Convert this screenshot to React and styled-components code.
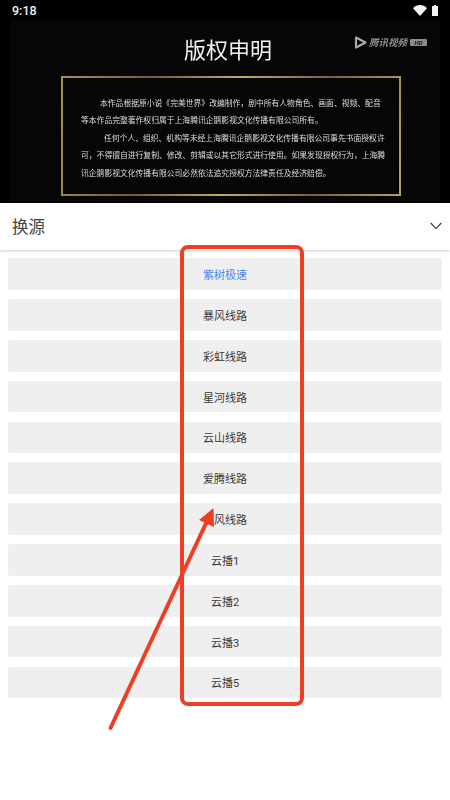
import React from 'react';
import styled, { createGlobalStyle } from 'styled-components';

const Global = createGlobalStyle`
  html, body { margin: 0; padding: 0; background: #fff; }
  #root { width: 450px; height: 800px; }
  * { box-sizing: border-box; }
`;
const CJK = `"Roboto", "Noto Sans CJK SC", sans-serif`;

const Page = styled.div`
  position: relative; width: 450px; height: 800px; overflow: hidden;
  display: flex; flex-direction: column; background: #fff; font-family: ${CJK};
`;
const StatusBar = styled.div`
  height: 20px; flex: none; background: #000; color: #f2f2f2;
  display: flex; align-items: center; justify-content: space-between;
  padding: 0 12px; font-size: 12.5px; font-weight: 500;
`;
const StatusIcons = styled.div`display: flex; align-items: center; gap: 5px;`;
const VideoFrame = styled.div`
  height: 183px; flex: none; background: #000; padding: 0 10px;
`;
const Slide = styled.div`
  height: 100%; padding-top: 13px; display: flex; flex-direction: column; align-items: center;
  position: relative; color: #eee; filter: blur(0.4px);
  background-color: #060606;
  background-image: radial-gradient(#111 0.5px, transparent 0.6px);
  background-size: 2px 2px;
`;
const Title = styled.div`
  font-size: 22px; line-height: 30px; color: #f0f0f0; letter-spacing: 0;
  font-family: "Noto Sans CJK SC", sans-serif; font-weight: 400; margin-left: 6px;
`;
const Brand = styled.div`
  position: absolute; right: 13px; top: 15px; display: flex; align-items: center; gap: 2px; color: #a8a8a8;
`;
const BrandName = styled.span`
  font-size: 9.5px; line-height: 14px; font-style: italic; white-space: nowrap; font-weight: 500;
  font-family: "Noto Sans CJK SC", sans-serif;
`;
const BrandBadge = styled.span`
  width: 17px; margin-left: 1px; text-align: center;
  font-size: 6px; line-height: 7px; height: 7px; background: #8c8c8c; color: #111;
  font-weight: 700; border-radius: 1px; font-style: italic;
`;
const Notice = styled.div`
  margin: 13px 0 0 12px; width: 340px; height: 120px; flex: none; padding: 15.5px 0 0 18px;
  border: 2px solid; border-image: linear-gradient(100deg, #a8914f, #6f5f34 25%, #c4ab62 50%, #75643a 75%, #b89f58) 1;
`;
const NoticeText = styled.p`
  margin: 0; font-size: 7.8px; line-height: 17.5px; color: #dedede; white-space: nowrap;
  font-family: "Noto Sans CJK SC", sans-serif;
  text-indent: ${p => p.$indent || 0}px;
`;
const Header = styled.div`
  position: relative; z-index: 1; height: 47px; flex: none; background: #fff;
  display: flex; align-items: center; justify-content: space-between; padding: 0 8px 1px 12px;
  box-shadow: 0 1px 3px rgba(0,0,0,.2);
`;
const HeaderTitle = styled.div`font-size: 16.5px; color: #444; font-family: "Noto Sans CJK SC", sans-serif;`;
const List = styled.div`
  display: flex; flex-direction: column; gap: 9.15px; padding: 8.3px 8px 0;
`;
const Item = styled.div`
  height: 31.7px; background: #efefef; border-radius: 3px;
  display: flex; align-items: center; justify-content: center;
  font-size: 11px; color: ${p => (p.$active ? '#4a86f0' : '#3a3a3a')};
`;
const Highlight = styled.div`
  position: absolute; z-index: 2; left: 180px; top: 245px; width: 124px; height: 461px;
  border: 4px solid #ee3f24; border-radius: 8px; pointer-events: none;
`;
const ArrowLayer = styled.svg`position: absolute; z-index: 3; left: 0; top: 0; pointer-events: none;`;

const lines = ['紫树极速','暴风线路','彩虹线路','星河线路','云山线路','爱腾线路','疾风线路','云播1','云播2','云播3','云播5'];

export default function App() {
  return (
    <Page>
      <Global />
      <StatusBar>
        <span>9:18</span>
        <StatusIcons>
          <svg width="14" height="11" viewBox="0 0 14 11"><path d="M0 3.2C1.8 1.2 4.2 0 7 0s5.2 1.2 7 3.2L7 11z" fill="#f4f4f4"/></svg>
          <svg width="6" height="11" viewBox="0 0 6 11"><path d="M2 0h2v1h2v10H0V1h2z" fill="#f4f4f4"/></svg>
        </StatusIcons>
      </StatusBar>
      <VideoFrame>
        <Slide>
          <Title>版权申明</Title>
          <Brand>
            <svg width="13" height="13" viewBox="0 0 13 13"><path d="M2 1.5 11.5 6.5 2 11.5z" fill="none" stroke="#a8a8a8" strokeWidth="2.2" strokeLinejoin="round"/></svg>
            <BrandName>腾讯视频</BrandName>
            <BrandBadge>HD</BrandBadge>
          </Brand>
          <Notice>
            <NoticeText $indent={19}>本作品根据原小说《完美世界》改编制作，剧中所有人物角色、画面、视频、配音</NoticeText>
            <NoticeText>等本作品完整著作权归属于上海腾讯企鹅影视文化传播有限公司所有。</NoticeText>
            <NoticeText $indent={23}>任何个人、组织、机构等未经上海腾讯企鹅影视文化传播有限公司事先书面授权许</NoticeText>
            <NoticeText>可，不得擅自进行复制、修改、剪辑或以其它形式进行使用。如果发现授权行为，上海腾</NoticeText>
            <NoticeText>讯企鹅影视文化传播有限公司必然依法追究授权方法律责任及经济赔偿。</NoticeText>
          </Notice>
        </Slide>
      </VideoFrame>
      <Header>
        <HeaderTitle>换源</HeaderTitle>
        <svg width="12" height="8" viewBox="0 0 12 8"><path d="M.7 1 6 6.6 11.3 1" fill="none" stroke="#444" strokeWidth="1.3"/></svg>
      </Header>
      <List>
        {lines.map((l, i) => <Item key={l} $active={i === 0}>{l}</Item>)}
      </List>
      <Highlight />
      <ArrowLayer width="450" height="800" viewBox="0 0 450 800">
        <line x1="110.5" y1="728" x2="208" y2="519" stroke="#ee3f24" strokeWidth="4" strokeLinecap="round"/>
        <polygon points="213.5,508 199,520 214,527" fill="#ee3f24"/>
      </ArrowLayer>
    </Page>
  );
}
